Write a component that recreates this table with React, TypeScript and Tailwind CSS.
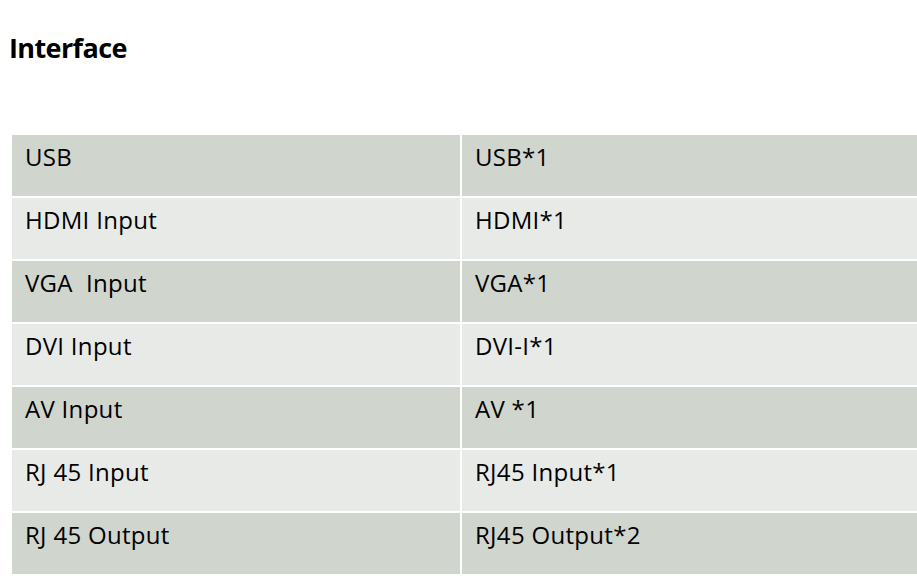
import React from "react";

const rows: [string, string][] = [
  ["USB", "USB*1"],
  ["HDMI Input", "HDMI*1"],
  ["VGA  Input", "VGA*1"],
  ["DVI Input", "DVI-I*1"],
  ["AV Input", "AV *1"],
  ["RJ 45 Input", "RJ45 Input*1"],
  ["RJ 45 Output", "RJ45 Output*2"],
];

export default function App() {
  return (
    <div className="w-[917px] h-[580px] bg-white overflow-hidden font-['Open_Sans',sans-serif] text-black">
      {/* Heading */}
      <h1 className="pl-[9px] pt-[30px] text-[27px] leading-[36px] font-bold tracking-[-0.6px]">
        Interface
      </h1>

      {/* Spec table */}
      <div className="ml-[12px] mt-[69px] flex flex-col gap-[2px]">
        {rows.map(([name, value], i) => {
          const cell = i % 2 === 0 ? "bg-[#d0d5ce]" : "bg-[#e8eae7]";
          return (
            <div key={name} className="flex h-[61px] gap-[2px] bg-white">
              <div className={`w-[448px] pl-[13px] pt-[7px] text-[24px] leading-[30px] tracking-[0.3px] whitespace-pre ${cell}`}>
                {name}
              </div>
              <div className={`flex-1 pl-[13px] pt-[7px] text-[24px] leading-[30px] tracking-[0.3px] whitespace-pre ${cell}`}>
                {value}
              </div>
            </div>
          );
        })}
      </div>
    </div>
  );
}
